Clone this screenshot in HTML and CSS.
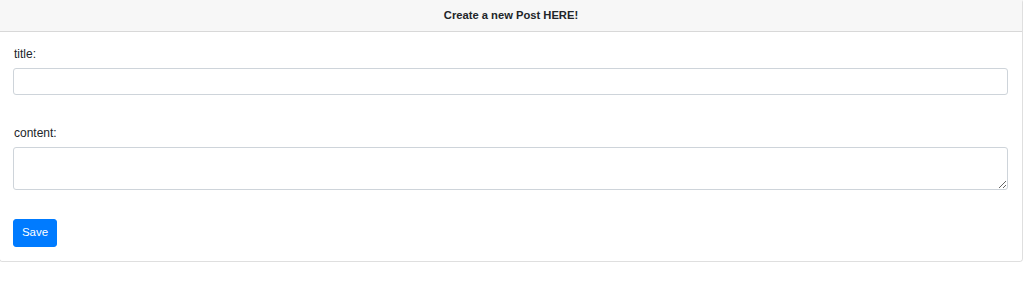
FILE: index.html
```html
<!DOCTYPE html>
<html lang="en">
<head>
  <meta charset="UTF-8">
  <meta name="viewport" content="width=device-width, initial-scale=1.0">
  <title>Create a new Post</title>
  <link rel="stylesheet" href="styles.css">
</head>
<body>
  <div class="card">
    <div class="card-header">Create a new Post HERE!</div>
    <div class="card-body">
      <form class="post-form" onsubmit="return false">
        <div class="form-group first">
          <label for="title">title:</label>
          <input type="text" id="title" name="title" class="form-control">
        </div>
        <div class="form-group">
          <label for="content">content:</label>
          <textarea id="content" name="content" rows="2" class="form-control"></textarea>
        </div>
        <button type="submit" class="btn-save">Save</button>
      </form>
    </div>
  </div>
</body>
</html>
```

FILE: styles.css
```css
body, html {
  margin: 0;
  font-family: "Liberation Sans", Arial, sans-serif;
  font-size: 11.2px;
  line-height: 1.5;
  color: #212529;
  background: #fff;
}
.card {
  width: 1024px;
  margin: -1px 0 0 -1px;
  border: 1px solid rgba(0, 0, 0, 0.125);
  border-radius: 3px;
  box-sizing: border-box;
}
.card-header {
  padding: 7px 14px;
  background-color: #f7f7f7;
  border-bottom: 1px solid rgba(0, 0, 0, 0.125);
  text-align: center;
  font-weight: bold;
}
.card-body {
  padding: 14px 14px 14px 13px;
}
.form-group {
  margin-bottom: 29px;
}
.form-group.first {
  margin-bottom: 30px;
}
.form-group label {
  display: block;
  font-size: 12px;
  line-height: 17px;
  margin-bottom: 5px;
  padding-left: 1px;
}
.form-control {
  display: block;
  width: 100%;
  box-sizing: border-box;
  margin: 0;
  padding: 4px 8px;
  font-family: inherit;
  font-size: 11.2px;
  line-height: 1.5;
  color: #495057;
  border: 1px solid #ced4da;
  border-radius: 3px;
  background: #fff;
}
input.form-control {
  height: 27px;
}
textarea.form-control {
  height: 43px;
}
.btn-save {
  display: block;
  width: 44px;
  height: 28px;
  padding: 0;
  font-family: inherit;
  font-size: 11.5px;
  line-height: 1.5;
  color: #fff;
  background-color: #007bff;
  border: 1px solid #007bff;
  border-radius: 3px;
  cursor: pointer;
}
```
